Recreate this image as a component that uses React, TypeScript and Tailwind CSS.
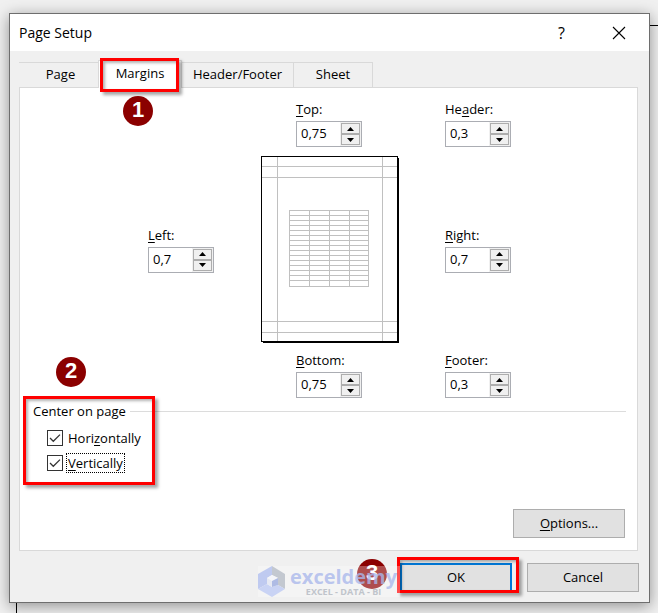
import { useState, type ReactNode } from "react";

interface IChildren {
  children: ReactNode;
};

interface IMargin {
  id: string;
  label: ReactNode;
  initial: string;
};

interface ICheck {
  id: string;
  checked: boolean;
  focused?: boolean;
  onChange: () => void;
  children: ReactNode;
};

const tabs = ["Page", "Margins", "Header/Footer", "Sheet"];

const rows = Array.from({ length: 14 }, (_, i) => 59 + i * 5);

function Key ({ children }: IChildren) {
  return <span className="underline underline-offset-2">{children}</span>;
};

function Step ({ children, className }: IChildren & { className: string }) {
  return (
    <span
      className={`absolute z-10 flex size-[30px] items-center justify-center rounded-full bg-[#8b0000] pb-0.5 font-['Liberation_Sans',sans-serif] text-[22px] leading-none font-bold text-white ${className}`}
    >
      {children}
    </span>
  );
};

function Frame ({ className }: { className: string }) {
  return (
    <span
      className={`pointer-events-none absolute z-10 border-3 border-[#ff0000] shadow-[3px_3px_3px_rgba(0,0,0,0.35),inset_2px_2px_3px_rgba(0,0,0,0.3)] ${className}`}
    />
  );
};

function MarginField ({ id, label, initial }: IMargin) {
  const [value, setValue] = useState(initial);

  const step = (delta: number) => {
    const next = Math.max(0, Number(value.replace(",", ".")) + delta);
    setValue(String(Number(next.toFixed(2))).replace(".", ","));
  };

  return (
    <div className="w-[66px]">
      <label htmlFor={id} className="block h-5 leading-4 whitespace-nowrap">{label}</label>
      <div className="flex h-[26px] border border-[#abadb3] bg-white">
        <input
          id={id}
          value={value}
          onChange={(e) => setValue(e.target.value)}
          className="w-full min-w-0 flex-1 pl-1 outline-none"
        />
        <div className="flex w-[21px] shrink-0 flex-col bg-[#f0f0f0] p-px">
          <button
            type="button"
            aria-label="Increase"
            onClick={() => step(0.25)}
            className="flex flex-1 items-center justify-center border border-[#adadad] bg-[#f0f0f0]"
          >
            <svg width="7" height="4" viewBox="0 0 7 4"><path d="M3.5 0L7 4H0z" /></svg>
          </button>
          <button
            type="button"
            aria-label="Decrease"
            onClick={() => step(-0.25)}
            className="flex flex-1 items-center justify-center border border-[#adadad] bg-[#f0f0f0]"
          >
            <svg width="7" height="4" viewBox="0 0 7 4"><path d="M3.5 4L7 0H0z" /></svg>
          </button>
        </div>
      </div>
    </div>
  );
};

function PagePreview () {
  return (
    <svg width="138" height="187" viewBox="0 0 138 187" shapeRendering="crispEdges">
      <rect x="2" y="2" width="136" height="185" fill="#000" />
      <rect width="137" height="186" fill="#000" />
      <rect x="1" y="1" width="135" height="184" fill="#fff" />
      <g stroke="#c0c0c0" fill="none">
        <path d="M16.5 1V185M121.5 1V185M1 10.5H136M1 21.5H136M1 165.5H136M1 176.5H136" />
        <rect x="28.500" y="54.500" width="79" height="76" />
        <path d="M48.500 54V131M68.500 54V131M88.500 54V131" />
        {rows.map((y) => <path key={y} d={`M28 ${y + 0.5}H108`} />)}
      </g>
    </svg>
  );
};

function Check ({ id, checked, focused, onChange, children }: ICheck) {
  return (
    <div className="flex h-[25px] items-center gap-[3px]">
      <span className="relative flex size-4">
        <input
          id={id}
          type="checkbox"
          checked={checked}
          onChange={onChange}
          className="size-4 appearance-none border border-[#333] bg-white"
        />
        {checked && (
          <svg className="pointer-events-none absolute inset-0" width="16" height="16" viewBox="0 0 16 16" fill="none">
            <path d="M3 8l3.300 3.300L13 4.600" stroke="#333" strokeWidth="1.300" />
          </svg>
        )}
      </span>
      <label
        htmlFor={id}
        className={`border border-dotted px-px leading-[18px] ${focused ? "border-black" : "border-transparent"}`}
      >
        {children}
      </label>
    </div>
  );
};

function Watermark () {
  return (
    <div className="pointer-events-none absolute top-[15px] right-[249px] z-20 flex h-[31px] w-[142px] items-center gap-1 bg-white/30">
      <svg width="28" height="31" viewBox="0 0 28 31" className="shrink-0">
        <path d="M14 0L0 8v15l9-5v-6l5-3z" fill="#bfcaf0" />
        <path d="M14 0l13 8v15l-7-4v-7l-6-3z" fill="#c3c8d0" />
        <path d="M0 23l9-5 5 3 6-2 7 4-13 8z" fill="#c9d3f4" />
        <path d="M14 9l6 3-6 3-5-3z" fill="#f4f5f9" />
        <path d="M9 12l5 3v6l-5-3z" fill="#e6e9f3" />
        <path d="M20 12v7l-6 2v-6z" fill="#aebbe4" />
      </svg>
      <div className="flex flex-col items-center">
        <span className="text-xl leading-5 font-bold text-[#aab8ec]/80">exceldemy</span>
        <span className="text-[9px] leading-[9px] font-bold whitespace-nowrap text-[#c0c4cb]">EXCEL - DATA - BI</span>
      </div>
    </div>
  );
};

export default function App () {
  const [active, setActive] = useState("Margins");
  const [horizontal, setHorizontal] = useState(true);
  const [vertical, setVertical] = useState(true);

  return (
    <main className="relative flex min-h-screen flex-col bg-[#f0f0f0] pt-[13px] pr-2 pb-[10px] pl-[9px] font-['Open_Sans',sans-serif] text-[13px] text-black">
      <div className="absolute top-[25px] right-0 bottom-0 left-4 border-t border-l border-black bg-[#f0f0f0]" />
      <section
        role="dialog"
        aria-labelledby="title"
        className="relative flex flex-1 flex-col border border-[#6e6e6e] bg-[#f0f0f0] shadow-[0_3px_14px_rgba(0,0,0,0.4)]"
      >
        <header className="flex h-[37px] items-center justify-between bg-white pr-[23px] pl-[9px]">
          <h1 id="title" className="text-sm">Page Setup</h1>
          <div className="flex items-center gap-[47px]">
            <button type="button" aria-label="Help" className="text-base leading-none">?</button>
            <button type="button" aria-label="Close">
              <svg width="14" height="14" viewBox="0 0 14 14" stroke="#000" strokeWidth="1.100">
                <path d="M1 1l12 12M13 1L1 13" />
              </svg>
            </button>
          </div>
        </header>

        <div className="flex flex-1 flex-col pt-[9px] pr-[11px] pl-[9px]">
          <div role="tablist" className="relative z-10 -mb-px flex items-end">
            {tabs.map((tab) => (
              <button
                key={tab}
                type="button"
                role="tab"
                aria-selected={tab === active}
                onClick={() => setActive(tab)}
                className={`relative border-[#d9d9d9] ${
                  tab === active ? "h-7 w-[84px] border-x border-t bg-white pb-0.5" : "h-[26px] border-y"
                } ${tab === "Page" && tab !== active ? "w-[79px] pl-1" : ""} ${
                  tab === "Header/Footer" && tab !== active ? "w-28 border-r" : ""
                } ${tab === "Sheet" && tab !== active ? "w-[79px] border-r" : ""}`}
              >
                {tab}
                {tab === "Margins" && (
                  <>
                    <Frame className="-top-[3px] right-0.5 -bottom-1 left-px" />
                    <Step className="top-[35px] left-6">1</Step>
                  </>
                )}
              </button>
            ))}
          </div>

          <div role="tabpanel" className="flex flex-1 flex-col border border-[#d9d9d9] bg-white pt-[13px] pb-3">
            <div className="grid grid-cols-[113px_184px_66px] items-center justify-center gap-y-[9px] pl-0.5">
              <div className="col-start-2 pl-[35px]">
                <MarginField id="top" label={<><Key>T</Key>op:</>} initial="0,75" />
              </div>
              <MarginField id="header" label={<>He<Key>a</Key>der:</>} initial="0,3" />
              <MarginField id="left" label={<><Key>L</Key>eft:</>} initial="0,7" />
              <PagePreview />
              <MarginField id="right" label={<><Key>R</Key>ight:</>} initial="0,7" />
              <div className="col-start-2 pl-[35px]">
                <MarginField id="bottom" label={<><Key>B</Key>ottom:</>} initial="0,75" />
              </div>
              <MarginField id="footer" label={<><Key>F</Key>ooter:</>} initial="0,3" />
            </div>

            <div role="group" aria-labelledby="center" className="relative mt-[3px] pr-[11px] pl-[13px]">
              <div className="flex items-center gap-1">
                <span id="center" className="leading-5">Center on page</span>
                <span className="h-px flex-1 bg-[#dcdcdc]" />
              </div>
              <div className="mt-1 pl-[14px]">
                <Check id="horizontal" checked={horizontal} onChange={() => setHorizontal(!horizontal)}>
                  Hori<Key>z</Key>ontally
                </Check>
                <Check id="vertical" checked={vertical} focused onChange={() => setVertical(!vertical)}>
                  <Key>V</Key>ertically
                </Check>
              </div>
              <Frame className="-top-[5px] left-[3px] h-[89px] w-[132px]" />
              <Step className="-top-11 left-9">2</Step>
            </div>

            <button
              type="button"
              className="mt-auto mr-3 h-[29px] w-28 self-end border border-[#adadad] bg-[#e1e1e1]"
            >
              <Key>O</Key>ptions...
            </button>
          </div>
        </div>

        <footer className="relative flex h-[51px] items-start justify-end gap-[15px] pt-3 pr-[10px]">
          <Watermark />
          <div className="relative">
            <button type="button" className="h-[29px] w-28 border-2 border-[#0078d7] bg-[#e1e1e1]">OK</button>
            <Frame className="-top-1.5 -right-[7px] -bottom-px -left-[3px]" />
            <Step className="-top-1 -left-[43px]">3</Step>
          </div>
          <button type="button" className="h-[29px] w-28 border border-[#adadad] bg-[#e1e1e1]">Cancel</button>
        </footer>
      </section>
    </main>
  );
};
